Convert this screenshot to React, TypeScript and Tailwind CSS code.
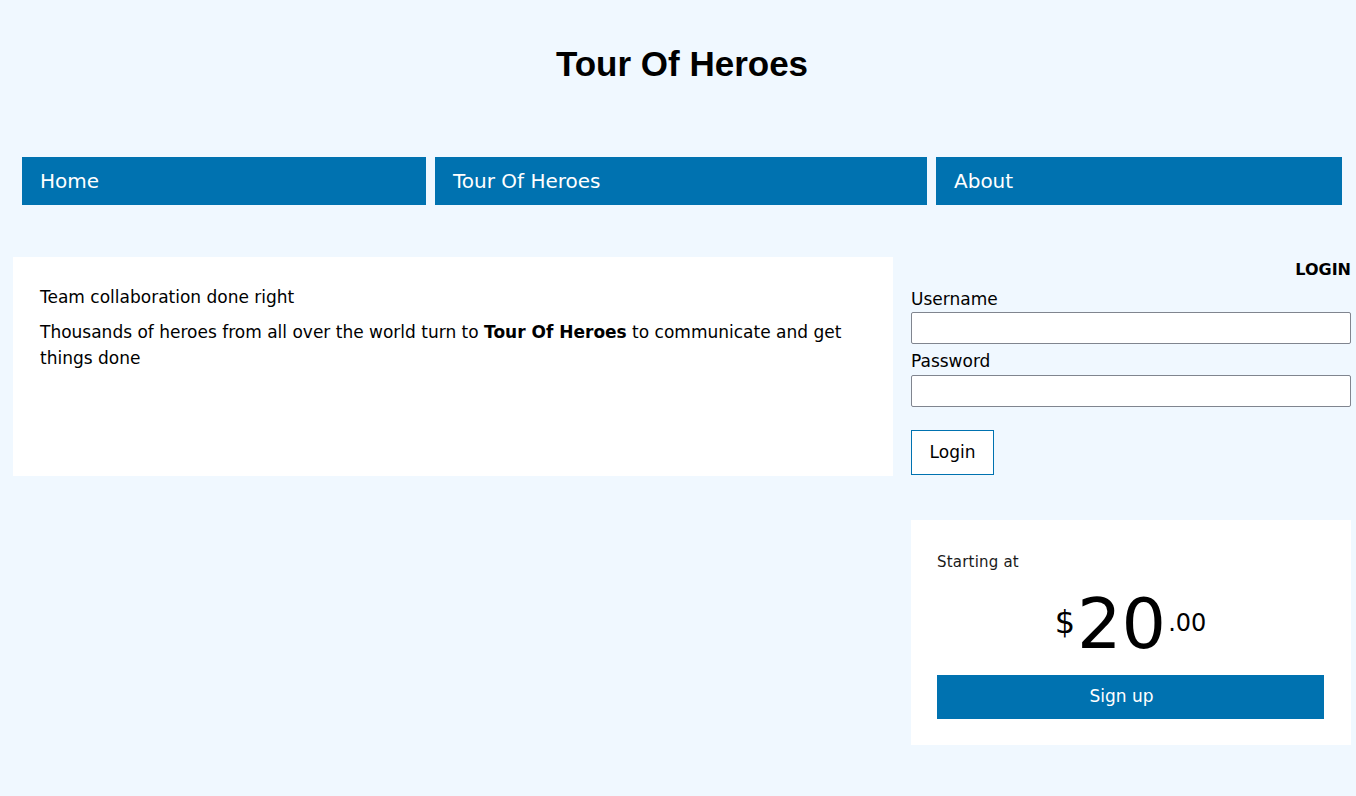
const dejavu = "font-['DejaVu_Sans',sans-serif]";

function NavBar() {
  const items = [
    { label: "Home", width: "w-[404px]" },
    { label: "Tour Of Heroes", width: "w-[492px]" },
    { label: "About", width: "w-[406px]" },
  ];

  return (
    <nav className="mt-[73px] flex gap-[9px] pl-[22px]">
      {items.map((item) => (
        <a
          key={item.label}
          href="#"
          className={`${item.width} flex h-[48px] items-center bg-[#0072b0] px-[18px] text-[20px] leading-[48px] text-white`}
        >
          {item.label}
        </a>
      ))}
    </nav>
  );
}

function LoginForm() {
  return (
    <form className="flex flex-col" onSubmit={(e) => e.preventDefault()}>
      <h2 className="mt-[3px] h-[20px] text-right text-[16px] font-bold leading-[20px] text-black">LOGIN</h2>
      <label className="mt-[9px] h-[20px] text-[17px] leading-[20px] text-black">Username</label>
      <input
        type="text"
        className="mt-[3px] h-[32px] w-full rounded-[2px] border border-[#80858f] bg-white px-2 text-[16px] outline-none"
      />
      <label className="mt-[7px] h-[20px] text-[17px] leading-[20px] text-black">Password</label>
      <input
        type="password"
        className="mt-[4px] h-[32px] w-full rounded-[2px] border border-[#80858f] bg-white px-2 text-[16px] outline-none"
      />
      <div>
        <button
          type="submit"
          className="mt-[23px] h-[45px] w-[83px] border border-[#0072b0] bg-white text-[17px] text-black"
        >
          Login
        </button>
      </div>
    </form>
  );
}

function PriceCard() {
  return (
    <div className="mt-[45px] bg-white pt-[33px] pr-[27px] pb-[26px] pl-[26px]">
      <p className="h-[18px] text-[15px] leading-[18px] tracking-[0.2px] text-[#1a1a1a]">Starting at</p>
      <div className="mt-[18px] flex h-[70px] items-start justify-center text-black">
        <span className="mt-[17px] text-[32px] leading-[32px]">$</span>
        <span className="ml-[2px] text-[70px] leading-[70px]">20</span>
        <span className="mt-[22px] ml-[2px] text-[24px] leading-[24px]">.00</span>
      </div>
      <button
        type="button"
        className="mt-[16px] h-[44px] w-full bg-[#0072b0] pr-[18px] text-[17px] text-white"
      >
        Sign up
      </button>
    </div>
  );
}

export default function App() {
  return (
    <div className={`min-h-[796px] bg-[#f0f8ff] ${dejavu}`}>
      <h1 className="pt-[44px] pl-[8px] text-center font-['Liberation_Sans',Arial,sans-serif] text-[35px] font-bold leading-[40px] text-black">
        Tour Of Heroes
      </h1>

      <NavBar />

      <main className="mt-[52px] flex gap-[18px] pl-[13px]">
        <section className="h-[219px] w-[880px] bg-white px-[27px] pt-[27px] text-[17px] leading-[26px] text-black">
          <p>Team collaboration done right</p>
          <p className="mt-[9px]">
            Thousands of heroes from all over the world turn to <b>Tour Of Heroes</b> to communicate and get
            things done
          </p>
        </section>

        <aside className="w-[440px]">
          <LoginForm />
          <PriceCard />
        </aside>
      </main>
    </div>
  );
}
